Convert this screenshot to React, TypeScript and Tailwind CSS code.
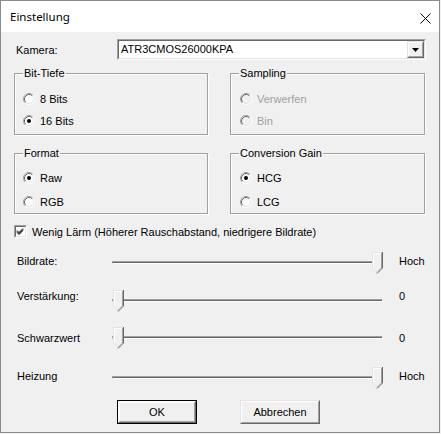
import React from "react";

const Radio = ({ checked, disabled }: { checked?: boolean; disabled?: boolean }) => (
  <svg width="12" height="12" viewBox="0 0 12 12" className="shrink-0">
    <circle cx="6" cy="6" r="5" fill={disabled ? "#f0f0f0" : "#ffffff"} />
    <path d="M2.11 9.89 A5.5 5.5 0 0 1 9.89 2.11" stroke="#a0a0a0" fill="none" />
    <path d="M9.89 2.11 A5.5 5.5 0 0 1 2.11 9.89" stroke="#ffffff" fill="none" />
    <path d="M2.82 9.18 A4.5 4.5 0 0 1 9.18 2.82" stroke="#696969" fill="none" />
    <path d="M9.18 2.82 A4.5 4.5 0 0 1 2.82 9.18" stroke="#e3e3e3" fill="none" />
    {checked && <circle cx="6" cy="6" r="2" fill="#000" />}
  </svg>
);

const RadioRow = ({
  label,
  checked,
  disabled,
  className,
}: {
  label: string;
  checked?: boolean;
  disabled?: boolean;
  className?: string;
}) => (
  <div className={"flex items-center h-[16px] " + (className ?? "")}>
    <Radio checked={checked} disabled={disabled} />
    <span className={"ml-[5px] leading-[13px] " + (disabled ? "text-[#a0a0a0]" : "text-black")}>{label}</span>
  </div>
);

const Thumb = ({ className }: { className: string }) => (
  <svg width="11" height="22" viewBox="0 0 11 22" className={className}>
    <polygon points="0,0 11,0 11,16 5.5,21.5 0,16" fill="#f0f0f0" />
    <polyline points="0.5,16 0.5,0.5 10,0.5" stroke="#e3e3e3" fill="none" />
    <polyline points="1.5,16 1.5,1.5 9,1.5" stroke="#ffffff" fill="none" />
    <polyline points="0.5,16 5,20.5" stroke="#e3e3e3" fill="none" />
    <polyline points="10.5,0 10.5,16 5,21.5" stroke="#696969" fill="none" />
    <polyline points="9.5,1 9.5,16 5,20.5" stroke="#a0a0a0" fill="none" />
  </svg>
);

const Slider = ({ pos }: { pos: "left" | "right" }) => (
  <div className="relative w-[272px] h-[22px] shrink-0">
    <div className="absolute left-0 w-[271px] top-[9px] h-[3px] border-t border-l border-b border-r border-t-[#a0a0a0] border-l-[#a0a0a0] border-b-white border-r-white bg-[#696969]" />
    <Thumb className={pos === "left" ? "absolute left-[1px] top-0" : "absolute left-[260px] top-0"} />
  </div>
);

const SliderRow = ({
  label,
  value,
  pos,
  mt,
  lt,
}: {
  label: string;
  value: string;
  pos: "left" | "right";
  mt: string;
  lt: string;
}) => (
  <div className={"flex items-start h-[22px] " + mt}>
    <div className={"w-[95px] ml-[16px] leading-[13px] " + lt}>{label}</div>
    <Slider pos={pos} />
    <div className={"ml-[15px] leading-[13px] " + lt}>{value}</div>
  </div>
);

const Group = ({
  title,
  children,
  className,
}: {
  title: string;
  children: React.ReactNode;
  className?: string;
}) => (
  <fieldset
    className={
      "border border-[#a0a0a0] shadow-[inset_1px_1px_0_#ffffff,1px_1px_0_#ffffff] " + (className ?? "")
    }
  >
    <legend className="ml-[8px] px-[1px] leading-[13px] bg-[#f0f0f0]">{title}</legend>
    {children}
  </fieldset>
);

const Raised = ({ children, className }: { children: React.ReactNode; className?: string }) => (
  <div
    className={
      "border border-t-[#e3e3e3] border-l-[#e3e3e3] border-r-[#696969] border-b-[#696969] " + (className ?? "")
    }
  >
    <div className="w-full h-full border border-t-white border-l-white border-r-[#a0a0a0] border-b-[#a0a0a0] flex items-center justify-center bg-[#f0f0f0]">
      {children}
    </div>
  </div>
);

export default function App() {
  return (
    <div className="w-[441px] h-[434px] bg-[#f0f0f0] text-[11px] text-black [font-family:'Liberation_Sans',Arial,sans-serif]">
      <div className="w-[440px] h-[433px] border border-[#8a8a8a] bg-[#f0f0f0] flex flex-col">
        {/* Title bar */}
        <div className="h-[31px] bg-white flex items-start justify-between shrink-0">
          <span className="ml-[9px] mt-[8px] text-[11.5px] leading-[16px] [font-family:'Noto_Sans',sans-serif]">
            Einstellung
          </span>
          <svg width="11" height="11" viewBox="0 0 11 11" className="mt-[12px] mr-[8px]">
            <path d="M0.5 0.5 L10.5 10.5 M10.5 0.5 L0.5 10.5" stroke="#000" strokeWidth="1" />
          </svg>
        </div>

        {/* Kamera row */}
        <div className="flex items-center h-[21px] mt-[7px]">
          <div className="ml-[15px] w-[101px] pt-[2px] leading-[13px]">Kamera:</div>
          <div className="w-[309px] h-[21px] border border-t-[#a0a0a0] border-l-[#a0a0a0] border-r-white border-b-white">
            <div className="w-full h-full border border-t-[#696969] border-l-[#696969] border-r-[#e3e3e3] border-b-[#e3e3e3] bg-white flex items-center">
              <span className="pl-[2px] flex-1 leading-[13px]">ATR3CMOS26000KPA</span>
              <Raised className="w-[17px] h-[17px]">
                <svg width="7" height="4" viewBox="0 0 7 4">
                  <polygon points="0,0 7,0 3.5,4" fill="#000" />
                </svg>
              </Raised>
            </div>
          </div>
        </div>

        {/* Bit-Tiefe / Sampling */}
        <div className="flex mt-[7px] ml-[13px] gap-[22px]">
          <Group title="Bit-Tiefe" className="w-[194px] pt-[11px] pb-[5px]">
            <RadioRow label="8 Bits" className="pl-[8px]" />
            <RadioRow label="16 Bits" checked className="pl-[8px] mt-[6px]" />
          </Group>
          <Group title="Sampling" className="w-[195px] pt-[11px] pb-[5px]">
            <RadioRow label="Verwerfen" disabled className="pl-[9px]" />
            <RadioRow label="Bin" disabled className="pl-[9px] mt-[6px]" />
          </Group>
        </div>

        {/* Format / Conversion Gain */}
        <div className="flex mt-[12px] ml-[13px] gap-[22px]">
          <Group title="Format" className="w-[194px] pt-[10px] pb-[3px]">
            <RadioRow label="Raw" checked className="pl-[8px]" />
            <RadioRow label="RGB" className="pl-[8px] mt-[8px]" />
          </Group>
          <Group title="Conversion Gain" className="w-[195px] pt-[10px] pb-[3px]">
            <RadioRow label="HCG" checked className="pl-[9px]" />
            <RadioRow label="LCG" className="pl-[9px] mt-[8px]" />
          </Group>
        </div>

        {/* Checkbox */}
        <div className="flex items-center h-[13px] mt-[11px] ml-[13px]">
          <div className="w-[13px] h-[13px] border border-t-[#a0a0a0] border-l-[#a0a0a0] border-r-white border-b-white shrink-0">
            <div className="w-full h-full border border-t-[#696969] border-l-[#696969] border-r-[#e3e3e3] border-b-[#e3e3e3] bg-white">
              <svg width="9" height="9" viewBox="0 0 9 9">
                <path d="M1 3.5 L3 5.5 L7 1.5 M1 4.5 L3 6.5 L7 2.5 M1 5.5 L3 7.5 L7 3.5" stroke="#000" fill="none" />
              </svg>
            </div>
          </div>
          <span className="ml-[5px] leading-[13px] pt-[1px]">Wenig Lärm (Höherer Rauschabstand, niedrigere Bildrate)</span>
        </div>

        {/* Sliders */}
        <SliderRow label="Bildrate:" value="Hoch" pos="right" mt="mt-[14px]" lt="mt-[3px]" />
        <SliderRow label="Verstärkung:" value="0" pos="left" mt="mt-[16px]" lt="mt-[0px]" />
        <SliderRow label="Schwarzwert" value="0" pos="left" mt="mt-[15px]" lt="mt-[5px]" />
        <SliderRow label="Heizung" value="Hoch" pos="right" mt="mt-[18px]" lt="mt-[3px]" />

        {/* Buttons */}
        <div className="flex mt-[11px] ml-[116px]">
          <div className="w-[80px] h-[24px] border border-black">
            <Raised className="w-full h-full !border-t-white !border-l-white">
              <span className="leading-[13px]">OK</span>
            </Raised>
          </div>
          <Raised className="w-[80px] h-[24px] ml-[43px]">
            <span className="leading-[13px]">Abbrechen</span>
          </Raised>
        </div>
      </div>
    </div>
  );
}
